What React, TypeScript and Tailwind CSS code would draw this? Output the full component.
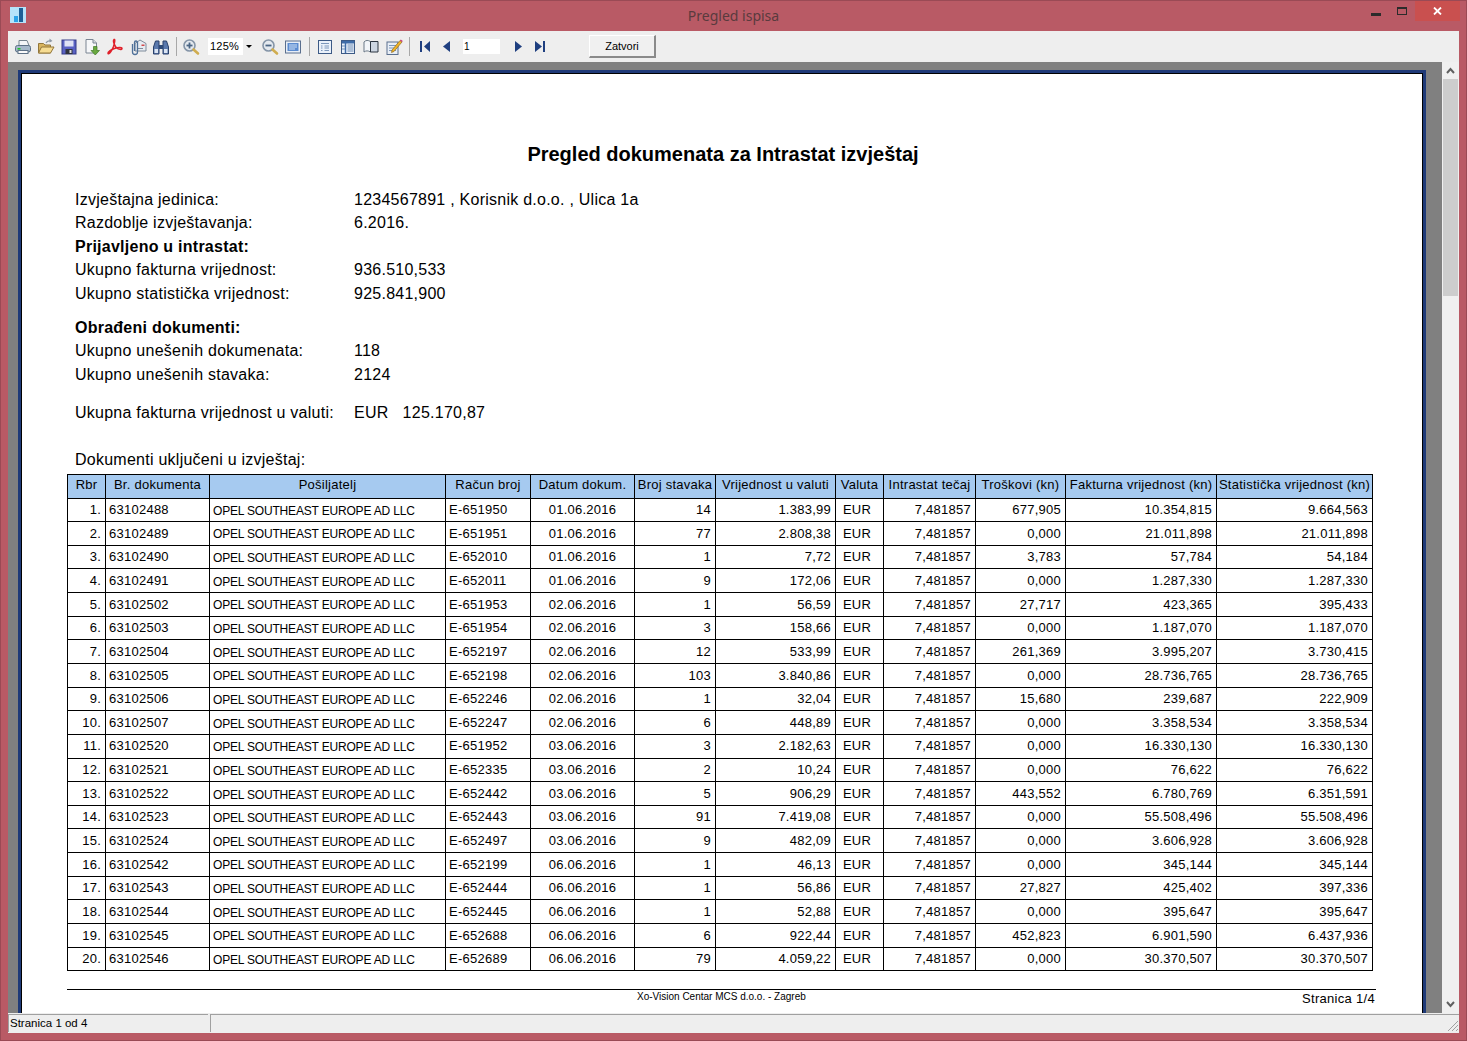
const rows = [
  ["63102488", "E-651950", "01.06.2016", "14", "1.383,99", "677,905", "10.354,815", "9.664,563"],
  ["63102489", "E-651951", "01.06.2016", "77", "2.808,38", "0,000", "21.011,898", "21.011,898"],
  ["63102490", "E-652010", "01.06.2016", "1", "7,72", "3,783", "57,784", "54,184"],
  ["63102491", "E-652011", "01.06.2016", "9", "172,06", "0,000", "1.287,330", "1.287,330"],
  ["63102502", "E-651953", "02.06.2016", "1", "56,59", "27,717", "423,365", "395,433"],
  ["63102503", "E-651954", "02.06.2016", "3", "158,66", "0,000", "1.187,070", "1.187,070"],
  ["63102504", "E-652197", "02.06.2016", "12", "533,99", "261,369", "3.995,207", "3.730,415"],
  ["63102505", "E-652198", "02.06.2016", "103", "3.840,86", "0,000", "28.736,765", "28.736,765"],
  ["63102506", "E-652246", "02.06.2016", "1", "32,04", "15,680", "239,687", "222,909"],
  ["63102507", "E-652247", "02.06.2016", "6", "448,89", "0,000", "3.358,534", "3.358,534"],
  ["63102520", "E-651952", "03.06.2016", "3", "2.182,63", "0,000", "16.330,130", "16.330,130"],
  ["63102521", "E-652335", "03.06.2016", "2", "10,24", "0,000", "76,622", "76,622"],
  ["63102522", "E-652442", "03.06.2016", "5", "906,29", "443,552", "6.780,769", "6.351,591"],
  ["63102523", "E-652443", "03.06.2016", "91", "7.419,08", "0,000", "55.508,496", "55.508,496"],
  ["63102524", "E-652497", "03.06.2016", "9", "482,09", "0,000", "3.606,928", "3.606,928"],
  ["63102542", "E-652199", "06.06.2016", "1", "46,13", "0,000", "345,144", "345,144"],
  ["63102543", "E-652444", "06.06.2016", "1", "56,86", "27,827", "425,402", "397,336"],
  ["63102544", "E-652445", "06.06.2016", "1", "52,88", "0,000", "395,647", "395,647"],
  ["63102545", "E-652688", "06.06.2016", "6", "922,44", "452,823", "6.901,590", "6.437,936"],
  ["63102546", "E-652689", "06.06.2016", "79", "4.059,22", "0,000", "30.370,507", "30.370,507"],
];

const headers = [
  ["Rbr", "w-[38px]"],
  ["Br. dokumenta", "w-[104px]"],
  ["Pošiljatelj", "w-[236px]"],
  ["Račun broj", "w-[85px]"],
  ["Datum dokum.", "w-[104px]"],
  ["Broj stavaka", "w-[81px]"],
  ["Vrijednost u valuti", "w-[120px]"],
  ["Valuta", "w-[48px]"],
  ["Intrastat tečaj", "w-[92px]"],
  ["Troškovi (kn)", "w-[90px]"],
  ["Fakturna vrijednost (kn)", "w-[151px]"],
  ["Statistička vrijednost (kn)", "w-[156px]"],
];

function Icon({ children, className = "" }: { children: React.ReactNode; className?: string }) {
  return (
    <svg width="18" height="18" viewBox="0 0 18 18" className={"shrink-0 " + className}>
      {children}
    </svg>
  );
}

function Sep() {
  return <div className="h-[19px] w-px bg-[#a8a8a8] shrink-0" />;
}

function MagGlass({ plus }: { plus?: boolean }) {
  return (
    <Icon>
      <circle cx="7.5" cy="7.5" r="5.5" fill="#e4e9ef" stroke="#8595a8" strokeWidth="1.6" />
      {plus && <path d="M7.5 4.5v6" stroke="#4a6585" strokeWidth="1.8" />}
      <path d="M4.5 7.5h6" stroke="#4a6585" strokeWidth="1.8" />
      <path d="M11.5 11.5l4.5 4" stroke="#d0ad50" strokeWidth="2.6" strokeLinecap="round" />
    </Icon>
  );
}

function DocLines({ grid }: { grid?: boolean }) {
  return (
    <Icon>
      <rect x="2.5" y="2.5" width="13" height="13" fill="#eaf1fa" stroke="#3c5a86" />
      {grid && <rect x="3" y="3" width="12" height="2.5" fill="#3f6ca8" />}
      {grid && <path d="M6.500 3v12" stroke="#3f6ca8" strokeWidth="1.500" />}
      {grid ? (
        <path d="M8.500 7h6M8.500 9h6M8.500 11h6M8.500 13h6M3 8h3M3 11h3" stroke="#6f8db5" />
      ) : (
        <path d="M5 5.500h8M8.500 8h4.500M8.500 10h4.500M8.500 12.500h4.500M5 8h1.500M5 10h1.500M5 12.500h1.500" stroke="#7c97bb" />
      )}
    </Icon>
  );
}

function Toolbar() {
  return (
    <div className="h-[31px] bg-[#eeeeee] flex items-center pl-[6px] shrink-0 text-[11px] text-black">
      <div className="flex items-center gap-[5px]">
        <Icon>
          <path d="M5 7.500V2.500h8l2 5z" fill="#f4f6f8" stroke="#76848f" />
          <rect x="1.500" y="7.500" width="15" height="6.500" rx="2" fill="#a6b8ca" stroke="#5d7186" />
          <rect x="4" y="12.500" width="10" height="3" fill="#fafafa" stroke="#5d7186" />
          <rect x="3.500" y="10" width="3" height="1.600" fill="#22c02b" />
        </Icon>
        <Icon>
          <path d="M1.500 15V5.500h5l1.500 1.500h5.500V15z" fill="#d8b45e" stroke="#92763a" />
          <path d="M1.500 15l3-6h12.500l-3.500 6z" fill="#f6dc92" stroke="#92763a" />
          <path d="M9 5c1-2 2.500-2.500 4.500-2" fill="none" stroke="#8d98a4" strokeWidth="1.300" />
          <path d="M12.500 .5l3 2.500-3 1.500z" fill="#8d98a4" />
        </Icon>
        <Icon>
          <rect x="2" y="2" width="14" height="14" fill="#5a62c4" stroke="#343a86" />
          <rect x="4.500" y="2.500" width="9" height="6" fill="#dfe2f4" />
          <rect x="5.500" y="11" width="7" height="5" fill="#30343e" />
          <rect x="9.500" y="12" width="2" height="3" fill="#dddddd" />
        </Icon>
        <Icon>
          <path d="M3 1.500h7l3.500 3.500v10H3z" fill="#f6f7f9" stroke="#7b8592" />
          <path d="M10 1.500V5h3.500" fill="#d5dae0" stroke="#7b8592" />
          <path d="M10.500 8.500h3.500v4h2.500l-4.250 4.500-4.250-4.500h2.500z" fill="#69a83f" stroke="#3f7a24" strokeWidth="0.700" />
        </Icon>
        <Icon>
          <path
            d="M8 1.500c-1.500 1 .5 6 2.500 8.500 2 1.500 5.500 2 5.500.5s-4-1-7.500 0C5 11.500 1.500 14 2 15.500s4-2.500 5.500-7C8.500 5 9.500 1 8 1.500z"
            fill="none"
            stroke="#e0202a"
            strokeWidth="1.500"
          />
        </Icon>
        <Icon>
          <path d="M6 5.500l5-3.500 6 3.500V13H6z" fill="#e6ebf1" stroke="#7e8b9a" />
          <rect x="12.500" y="6.500" width="3" height="1.500" fill="#d24a4a" />
          <path d="M9 10.500h5" stroke="#7e8b9a" />
          <path d="M3.500 6v8a2.500 2.500 0 0 0 5 0V4.500a1.500 1.500 0 0 0-3 0V13" fill="none" stroke="#4e7099" strokeWidth="1.300" />
        </Icon>
        <Icon>
          <path d="M1.500 16V9l2-6h3.500v13zM16.500 16V9l-2-6H11v13z" fill="#5a79ad" stroke="#2a416b" />
          <rect x="7" y="7" width="4" height="4" fill="#2e4a78" />
          <rect x="2.500" y="11" width="3.500" height="4" fill="#dbe5f3" />
          <rect x="12" y="11" width="3.500" height="4" fill="#dbe5f3" />
        </Icon>
      </div>
      <div className="ml-[6px]"><Sep /></div>
      <div className="ml-[5px]"><MagGlass plus /></div>
      <div className="ml-[8px] w-[46px] h-[17px] bg-white flex items-center justify-between font-['Liberation_Sans',sans-serif]">
        <span className="pl-[2px] tracking-[0.2px]">125%</span>
        <span className="w-[11px] h-full bg-[#eeeeee] flex items-center justify-center">
          <span className="border-x-[3px] border-t-[3px] border-x-transparent border-t-black" />
        </span>
      </div>
      <div className="ml-[7px]"><MagGlass /></div>
      <div className="ml-[5px]">
        <Icon>
          <rect x="1.500" y="3" width="15" height="12" fill="#e8eef6" stroke="#5a6f8e" />
          <rect x="3.500" y="5" width="11" height="8" fill="#5b8bd0" />
          <path d="M5 7h8M5 9h8M5 11h6" stroke="#cfe0f6" />
        </Icon>
      </div>
      <div className="ml-[7px]"><Sep /></div>
      <div className="flex items-center gap-[5px] ml-[6px]">
        <DocLines />
        <DocLines grid />
        <Icon>
          <path d="M2 4c2-2 4-2 6.500-.5V14C6 12.500 4 12.500 2 14z" fill="#f2f5f9" stroke="#6b7987" />
          <path d="M8.500 3.500h7.500V14H8.500z" fill="#cdd6e2" stroke="#2b3440" />
        </Icon>
        <Icon>
          <rect x="2" y="4" width="11" height="12.500" fill="#e8eef6" stroke="#5a6f8e" />
          <path d="M4 7.500h7M4 10h7M4 12.500h7" stroke="#7e98bb" />
          <path d="M7 12l8-9.500 2 1.500-8 9.500-2.500 1z" fill="#f0b429" stroke="#7d5b14" strokeWidth="0.600" />
          <path d="M15 2.500l2 1.500 .8-1-2-1.500z" fill="#c93a7b" />
        </Icon>
      </div>
      <div className="ml-[6px]"><Sep /></div>
      <div className="flex items-center ml-[10px] text-[#1f3f80]">
        <svg width="11" height="11" viewBox="0 0 11 11" className="fill-current">
          <path d="M0 0h2v11H0zM10 0v11L4 5.500z" />
        </svg>
        <svg width="7" height="11" viewBox="0 0 7 11" className="fill-current ml-[12px]">
          <path d="M7 0v11L0 5.500z" />
        </svg>
        <div className="ml-[13px] w-[37px] h-[15px] bg-white text-black flex items-center pl-[1px] font-['Liberation_Sans',sans-serif] text-[10px]">
          1
        </div>
        <svg width="7" height="11" viewBox="0 0 7 11" className="fill-current ml-[15px]">
          <path d="M0 0v11l7-5.500z" />
        </svg>
        <svg width="11" height="11" viewBox="0 0 11 11" className="fill-current ml-[13px]">
          <path d="M0 0v11l7-5.500zM8 0h2v11H8z" />
        </svg>
      </div>
      <div className="ml-[43px] w-[67px] h-[23px] bg-[#f0f0f0] border border-t-white border-l-white border-r-[#8a8a8a] border-b-[#8a8a8a] border-r-2 border-b-2 flex items-center justify-center font-['Liberation_Sans',sans-serif] text-[11px]">
        Zatvori
      </div>
    </div>
  );
}

function InfoRow({ label, value, className = "" }: { label: string; value: string; className?: string }) {
  return (
    <div className={"flex h-[23.5px] items-center " + className}>
      <span className="w-[279px] shrink-0">{label}</span>
      <span>{value}</span>
    </div>
  );
}

function Sheet() {
  return (
    <div className="w-[1408px] shrink-0 bg-white border-t-[3px] border-l-[3px] border-r-[3px] border-[#1f3a78] outline-0 h-[1000px]">
      <div className="h-full bg-white border-t border-l border-r border-black pl-[45px] font-['Liberation_Sans',sans-serif] text-black overflow-hidden">
        <div className="w-[1306px] flex flex-col">
          <div className="pt-[68px] h-[114px] -ml-[45px] w-[1402px] text-center text-[20px] font-bold leading-[24px]">
            Pregled dokumenata za Intrastat izvještaj
          </div>
          <div className="text-[16px] tracking-[0.25px] pl-[8px] flex flex-col">
            <InfoRow label="Izvještajna jedinica:" value="1234567891 , Korisnik d.o.o. , Ulica 1a" />
            <InfoRow label="Razdoblje izvještavanja:" value="6.2016." />
            <div className="h-[23.5px] flex items-center font-bold">Prijavljeno u intrastat:</div>
            <InfoRow label="Ukupno fakturna vrijednost:" value="936.510,533" />
            <InfoRow label="Ukupno statistička vrijednost:" value="925.841,900" />
            <div className="h-[23.5px] mt-[10.5px] flex items-center font-bold">Obrađeni dokumenti:</div>
            <InfoRow label="Ukupno unešenih dokumenata:" value="118" />
            <InfoRow label="Ukupno unešenih stavaka:" value="2124" />
            <InfoRow label="Ukupna fakturna vrijednost u valuti:" value="EUR   125.170,87" className="mt-[14.5px] whitespace-pre" />
            <div className="h-[23.5px] mt-[23.5px] flex items-center">Dokumenti uključeni u izvještaj:</div>
          </div>
          <table className="mt-[2px] table-fixed border-collapse w-[1306px] text-[13px] tracking-[0.25px]">
            <thead>
              <tr className="h-[24px] bg-[#a6caf0]">
                {headers.map(([h, w]) => (
                  <th key={h} className={"border border-black font-normal whitespace-nowrap px-0 pb-[2px] " + w}>
                    {h}
                  </th>
                ))}
              </tr>
            </thead>
            <tbody>
              {rows.map((r, i) => (
                <tr key={r[0]} className="h-[23.65px]">
                  <td className="border border-black text-right pr-[4px]">{i + 1}.</td>
                  <td className="border border-black pl-[3px]">{r[0]}</td>
                  <td className="border border-black pl-[3px] pt-[2px] text-[12px] tracking-[-0.18px] whitespace-nowrap">
                    OPEL SOUTHEAST EUROPE AD LLC
                  </td>
                  <td className="border border-black pl-[3px]">{r[1]}</td>
                  <td className="border border-black text-center">{r[2]}</td>
                  <td className="border border-black text-right pr-[4px]">{r[3]}</td>
                  <td className="border border-black text-right pr-[4px]">{r[4]}</td>
                  <td className="border border-black text-center pr-[5px]">EUR</td>
                  <td className="border border-black text-right pr-[4px]">7,481857</td>
                  <td className="border border-black text-right pr-[4px]">{r[5]}</td>
                  <td className="border border-black text-right pr-[4px]">{r[6]}</td>
                  <td className="border border-black text-right pr-[4px]">{r[7]}</td>
                </tr>
              ))}
            </tbody>
          </table>
          <div className="mt-[18px] w-[1309px] border-t border-black flex justify-between items-start">
            <span className="ml-[570px] mt-[1px] text-[10px] leading-[12px]">Xo-Vision Centar MCS d.o.o. - Zagreb</span>
            <span className="text-[13px] leading-[16px] mt-[1px] tracking-[0.3px] pr-[1px]">Stranica 1/4</span>
          </div>
        </div>
      </div>
    </div>
  );
}

function Scrollbar() {
  return (
    <div className="w-[17px] bg-[#f0f0f0] shrink-0 flex flex-col items-center">
      <div className="h-[17px] flex items-center justify-center">
        <svg width="9" height="7" viewBox="0 0 9 7">
          <path d="M1 6l3.500-4L8 6" fill="none" stroke="#606060" strokeWidth="2" />
        </svg>
      </div>
      <div className="w-[15px] h-[217px] bg-[#cdcdcd]" />
      <div className="flex-1" />
      <div className="h-[17px] flex items-center justify-center">
        <svg width="9" height="7" viewBox="0 0 9 7">
          <path d="M1 1l3.500 4L8 1" fill="none" stroke="#606060" strokeWidth="2" />
        </svg>
      </div>
    </div>
  );
}

export default function App() {
  return (
    <div className="w-[1467px] h-[1041px] bg-[#b95a65] border border-[#9a4a55] flex flex-col overflow-hidden">
      <div className="h-[30px] shrink-0 flex items-start">
        <div className="ml-[9px] mt-[6px] w-[16px] h-[16px] bg-[#b5e3fa] flex items-end justify-center gap-px">
          <span className="w-[4px] h-[6px] bg-[#2ba3e8] mb-[1px]" />
          <span className="w-[4px] h-[14px] bg-[#1c5f96] mb-[1px]" />
        </div>
        <div className="flex-1 text-center text-[14px] leading-[30px] text-[#5a3a3e] font-['Noto_Sans',sans-serif] pl-[70px]">
          Pregled ispisa
        </div>
        <div className="flex items-start mr-[6px]">
          <div className="w-[10px] h-[3px] bg-[#2b2b2b] mt-[12px] mr-[16px]" />
          <div className="w-[10px] h-[8px] border border-t-[2px] border-[#2b2b2b] mt-[6px] mr-[8px]" />
          <div className="w-[45px] h-[20px] bg-[#c9504f] flex items-center justify-center">
            <svg width="9" height="8" viewBox="0 0 9 8">
              <path d="M1 .5l7 7M8 .5l-7 7" stroke="#fff" strokeWidth="1.800" />
            </svg>
          </div>
        </div>
      </div>
      <div className="mx-[7px] flex flex-col h-[1002px] bg-[#eeeeee]">
        <Toolbar />
        <div className="flex h-[951px] shrink-0">
          <div className="flex-1 bg-[#808080] pl-[10px] pt-[8px] overflow-hidden">
            <Sheet />
          </div>
          <Scrollbar />
        </div>
        <div className="h-[20px] flex items-center text-[11.5px] font-['Liberation_Sans',sans-serif] text-black gap-[2px] pt-[1px] pb-[1px] bg-[#eeeeee]">
          <div className="w-[200px] h-full border-t border-l border-[#a0a0a0] pl-[1px] pt-[1px] flex items-center">Stranica 1 od 4</div>
          <div className="flex-1 h-full border-t border-l border-[#a0a0a0] relative">
            <svg width="13" height="13" viewBox="0 0 13 13" className="absolute right-0 bottom-0">
              <path d="M12 2L2 12M12 6l-6 6M12 10l-2 2" stroke="#a0a0a0" />
            </svg>
          </div>
        </div>
      </div>
    </div>
  );
}
